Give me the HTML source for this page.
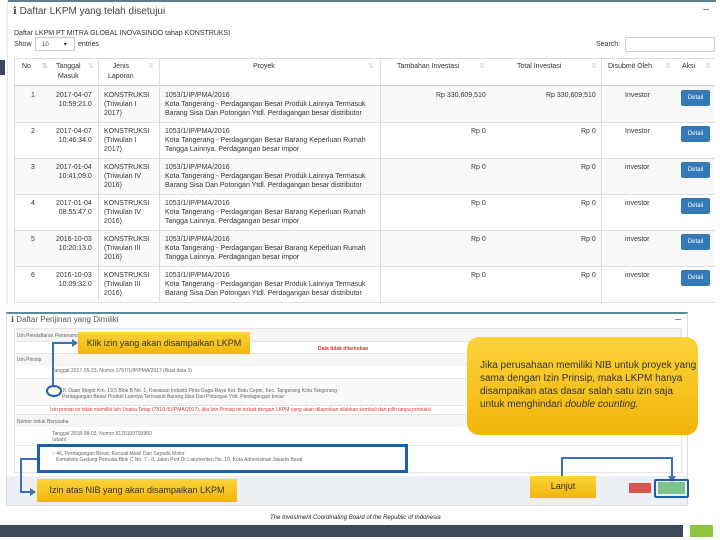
<!DOCTYPE html>
<html><head><meta charset="utf-8"><style>
*{margin:0;padding:0;box-sizing:border-box}
body{width:720px;height:540px;background:#fff;position:relative;overflow:hidden;font-family:"Liberation Sans",sans-serif;color:#333}
.a{position:absolute;white-space:nowrap}
.s{font-size:7px;line-height:9px}
.hd{font-size:7px;line-height:10px;text-align:center}
.vl{position:absolute;width:1px;background:#ddd}
.hl{position:absolute;height:1px;background:#ddd}
.btn{position:absolute;left:681px;width:29px;height:16px;background:#337ab7;color:#fff;font-size:6px;line-height:16px;text-align:center;border-radius:2px}
.y{position:absolute;background:linear-gradient(#fbd33a,#f2b50a);color:#333;font-family:"Liberation Sans Narrow","Liberation Sans",sans-serif}
.bl{position:absolute;background:#3e6fb5}
.tiny{font-size:5px;line-height:6px;color:#666}
</style></head><body>
<!-- top panel -->
<div class="a" style="left:7px;top:0;width:709px;height:2px;background:#5b7f95"></div>
<div class="a" style="left:7px;top:0;width:1px;height:305px;background:#e6e6e6"></div>
<div class="a" style="left:0;top:60px;width:5px;height:15px;background:#3d4a5c"></div>
<div class="a" style="left:13px;top:6px;font-size:10px;color:#444">ℹ&nbsp;Daftar LKPM yang telah disetujui</div>
<div class="a" style="left:703px;top:9px;width:6px;height:1px;background:#888"></div>
<div class="a s" style="left:14px;top:29px">Daftar LKPM PT MITRA GLOBAL INOVASINDO tahap KONSTRUKSI</div>
<div class="a s" style="left:14px;top:40px">Show</div>
<div class="a" style="left:35px;top:37px;width:40px;height:14px;border:1px solid #ccc;font-size:6px;padding:3px 6px">10<span style="margin-left:15px">▾</span></div>
<div class="a s" style="left:78px;top:40px">entries</div>
<div class="a s" style="left:596px;top:40px">Search:</div>
<div class="a" style="left:625px;top:37px;width:90px;height:15px;border:1px solid #ccc;border-radius:2px"></div>
<!-- table -->
<div class="a" style="left:15px;top:86px;width:700px;height:36px;background:#f9f9f9"></div>
<div class="a" style="left:15px;top:158px;width:700px;height:36px;background:#f9f9f9"></div>
<div class="a" style="left:15px;top:230px;width:700px;height:36px;background:#f9f9f9"></div>
<div class="hl" style="left:14px;top:58px;width:701px"></div>
<div class="hl" style="left:14px;top:85px;width:701px;background:#ccc"></div>
<div class="hl" style="left:14px;top:122px;width:701px"></div>
<div class="hl" style="left:14px;top:158px;width:701px"></div>
<div class="hl" style="left:14px;top:194px;width:701px"></div>
<div class="hl" style="left:14px;top:230px;width:701px"></div>
<div class="hl" style="left:14px;top:266px;width:701px"></div>
<div class="hl" style="left:14px;top:302px;width:701px"></div>
<div class="vl" style="left:14px;top:58px;height:245px"></div>
<div class="vl" style="left:98px;top:58px;height:245px"></div>
<div class="vl" style="left:159px;top:58px;height:245px"></div>
<div class="vl" style="left:380px;top:58px;height:245px"></div>
<div class="vl" style="left:601px;top:58px;height:245px"></div>
<div class="a hd" style="left:22px;top:62px">No</div>
<div class="a hd" style="left:56px;top:62px">Tanggal<br>Masuk</div>
<div class="a hd" style="left:108px;top:62px">Jenis<br>Laporan</div>
<div class="a hd" style="left:253px;top:62px">Proyek</div>
<div class="a hd" style="left:397px;top:62px">Tambahan Investasi</div>
<div class="a hd" style="left:517px;top:62px">Total Investasi</div>
<div class="a hd" style="left:608px;top:62px">Disubmit Oleh</div>
<div class="a hd" style="left:682px;top:62px">Aksi</div>
<div class="a" style="left:42px;top:62px;font-size:7px;color:#aaa">⇅</div>
<div class="a" style="left:88px;top:62px;font-size:7px;color:#ccc">⇅</div>
<div class="a" style="left:148px;top:62px;font-size:7px;color:#ccc">⇅</div>
<div class="a" style="left:368px;top:62px;font-size:7px;color:#ccc">⇅</div>
<div class="a" style="left:479px;top:62px;font-size:7px;color:#ccc">⇅</div>
<div class="a" style="left:591px;top:62px;font-size:7px;color:#ccc">⇅</div>
<div class="a" style="left:665px;top:62px;font-size:7px;color:#ccc">⇅</div>
<div class="a" style="left:705px;top:62px;font-size:7px;color:#ccc">⇅</div>

<div class="a s" style="left:31px;top:91px">1</div>
<div class="a s" style="left:56px;top:91px;text-align:right">2017-04-07<br>10:59:21.0</div>
<div class="a s" style="left:104px;top:91px">KONSTRUKSI<br>(Triwulan I<br>2017)</div>
<div class="a s" style="left:165px;top:91px">1053/1/IP/PMA/2016<br>Kota Tangerang - Perdagangan Besar Produk Lainnya Termasuk<br>Barang Sisa Dan Potongan Ytdl. Perdagangan besar distributor</div>
<div class="a s" style="left:436px;top:91px">Rp 330,609,510</div>
<div class="a s" style="left:546px;top:91px">Rp 330,609,510</div>
<div class="a s" style="left:625px;top:91px">Investor</div>
<div class="btn" style="top:90px">Detail</div>

<div class="a s" style="left:31px;top:127px">2</div>
<div class="a s" style="left:56px;top:127px;text-align:right">2017-04-07<br>10:46:34.0</div>
<div class="a s" style="left:104px;top:127px">KONSTRUKSI<br>(Triwulan I<br>2017)</div>
<div class="a s" style="left:165px;top:127px">1053/1/IP/PMA/2016<br>Kota Tangerang - Perdagangan Besar Barang Keperluan Rumah<br>Tangga Lainnya. Perdagangan besar impor</div>
<div class="a s" style="left:471px;top:127px">Rp 0</div>
<div class="a s" style="left:581px;top:127px">Rp 0</div>
<div class="a s" style="left:625px;top:127px">Investor</div>
<div class="btn" style="top:126px">Detail</div>

<div class="a s" style="left:31px;top:163px">3</div>
<div class="a s" style="left:56px;top:163px;text-align:right">2017-01-04<br>10:41:09.0</div>
<div class="a s" style="left:104px;top:163px">KONSTRUKSI<br>(Triwulan IV<br>2016)</div>
<div class="a s" style="left:165px;top:163px">1053/1/IP/PMA/2016<br>Kota Tangerang - Perdagangan Besar Produk Lainnya Termasuk<br>Barang Sisa Dan Potongan Ytdl. Perdagangan besar distributor</div>
<div class="a s" style="left:471px;top:163px">Rp 0</div>
<div class="a s" style="left:581px;top:163px">Rp 0</div>
<div class="a s" style="left:625px;top:163px">investor</div>
<div class="btn" style="top:162px">Detail</div>

<div class="a s" style="left:31px;top:199px">4</div>
<div class="a s" style="left:56px;top:199px;text-align:right">2017-01-04<br>08:55:47.0</div>
<div class="a s" style="left:104px;top:199px">KONSTRUKSI<br>(Triwulan IV<br>2016)</div>
<div class="a s" style="left:165px;top:199px">1053/1/IP/PMA/2016<br>Kota Tangerang - Perdagangan Besar Barang Keperluan Rumah<br>Tangga Lainnya. Perdagangan besar impor</div>
<div class="a s" style="left:471px;top:199px">Rp 0</div>
<div class="a s" style="left:581px;top:199px">Rp 0</div>
<div class="a s" style="left:625px;top:199px">investor</div>
<div class="btn" style="top:198px">Detail</div>

<div class="a s" style="left:31px;top:235px">5</div>
<div class="a s" style="left:56px;top:235px;text-align:right">2016-10-03<br>10:20:13.0</div>
<div class="a s" style="left:104px;top:235px">KONSTRUKSI<br>(Triwulan III<br>2016)</div>
<div class="a s" style="left:165px;top:235px">1053/1/IP/PMA/2016<br>Kota Tangerang - Perdagangan Besar Barang Keperluan Rumah<br>Tangga Lainnya. Perdagangan besar impor</div>
<div class="a s" style="left:471px;top:235px">Rp 0</div>
<div class="a s" style="left:581px;top:235px">Rp 0</div>
<div class="a s" style="left:625px;top:235px">investor</div>
<div class="btn" style="top:234px">Detail</div>

<div class="a s" style="left:31px;top:271px">6</div>
<div class="a s" style="left:56px;top:271px;text-align:right">2016-10-03<br>10:09:32.0</div>
<div class="a s" style="left:104px;top:271px">KONSTRUKSI<br>(Triwulan III<br>2016)</div>
<div class="a s" style="left:165px;top:271px">1053/1/IP/PMA/2016<br>Kota Tangerang - Perdagangan Besar Produk Lainnya Termasuk<br>Barang Sisa Dan Potongan Ytdl. Perdagangan besar distributor</div>
<div class="a s" style="left:471px;top:271px">Rp 0</div>
<div class="a s" style="left:581px;top:271px">Rp 0</div>
<div class="a s" style="left:625px;top:271px">investor</div>
<div class="btn" style="top:270px">Detail</div>

<!-- bottom panel -->
<div class="a" style="left:6px;top:312px;width:682px;height:194px;border:1px solid #d8dde3;border-top:2px solid #5b8aa0;background:#fff"></div>
<div class="a" style="left:11px;top:315px;font-size:8px;color:#555">ℹ&nbsp;Daftar Perijinan yang Dimiliki</div>
<div class="a" style="left:675px;top:319px;width:6px;height:1px;background:#888"></div>
<div class="a" style="left:14px;top:328px;width:668px;height:145px;border:1px solid #e5e5e5"></div>
<div class="a" style="left:15px;top:329px;width:666px;height:12px;background:#f5f5f5"></div>
<div class="a tiny" style="left:17px;top:333px">Izin Pendaftaran Penanaman Modal</div>
<div class="hl" style="left:15px;top:341px;width:666px;background:#e5e5e5"></div>
<div class="a tiny" style="left:318px;top:346px;color:#d33;font-weight:bold">Data tidak ditemukan</div>
<div class="hl" style="left:15px;top:353px;width:666px;background:#e5e5e5"></div>
<div class="a" style="left:15px;top:354px;width:666px;height:12px;background:#f5f5f5"></div>
<div class="a tiny" style="left:17px;top:357px">Izin Prinsip</div>
<div class="a tiny" style="left:52px;top:368px">Tanggal 2017-05-23, Nomor 1757/1/IP/PMA/2017 (Buat data 1)</div>
<div class="hl" style="left:15px;top:378px;width:666px;background:#e5e5e5"></div>
<div class="a" style="left:15px;top:379px;width:666px;height:26px;background:#f9f9f9"></div>
<div class="a tiny" style="left:62px;top:388px">Jl. Daan Mogot Km. 19,5 Blok B No. 1, Kawasan Industri Pinis Gaga Raya Kel. Batu Ceper, Kec. Tangerang Kota Tangerang<br>Perdagangan Besar Produk Lainnya Termasuk Barang Sisa Dan Potongan Ytdl. Perdagangan besar</div>
<div class="hl" style="left:15px;top:405px;width:666px;background:#e5e5e5"></div>
<div class="a tiny" style="left:50px;top:407px;color:#d33">Izin prinsip ini telah memiliki Izin Usaha Tetap (781/1/IU/PMA/2017), jika Izin Prinsip ini terkait dengan LKPM yang akan dilaporkan silahkan kembali dan pilih tanpa produksi</div>
<div class="hl" style="left:15px;top:414px;width:666px;background:#e5e5e5"></div>
<div class="a" style="left:15px;top:415px;width:666px;height:12px;background:#f5f5f5"></div>
<div class="a tiny" style="left:17px;top:419px">Nomor Induk Berusaha</div>
<div class="a tiny" style="left:52px;top:431px">Tanggal 2018-08-03, Nomor 8120100793960<br>(ubah)</div>
<div class="hl" style="left:15px;top:445px;width:666px;background:#e5e5e5"></div>
<div class="a tiny" style="left:52px;top:451px">○ 46, Perdagangan Besar, Kecuali Mobil Dan Sepeda Motor<br>&nbsp;&nbsp;&nbsp;Kompleks Gedung Pemuda Blok C No. 7 - 8, Jalan Prof Dr Latumenten No. 18, Kota Administrasi Jakarta Barat</div>
<div class="a" style="left:7px;top:476px;width:680px;height:29px;background:#ecf0f5"></div>
<div class="a" style="left:629px;top:483px;width:22px;height:10px;background:#d9534f"></div>
<div class="a" style="left:658px;top:482px;width:27px;height:12px;background:#7dc48a"></div>

<!-- footer -->
<div class="a" style="left:270px;top:515px;font-size:6px;font-style:italic;color:#222">The Investment Coordinating Board of the Republic of Indonesia</div>
<div class="a" style="left:0;top:525px;width:683px;height:12px;background:#3d4a5c"></div>
<div class="a" style="left:690px;top:525px;width:23px;height:12px;background:#8dc63f"></div>

<!-- annotations -->
<div class="y" style="left:78px;top:332px;width:172px;height:22px;font-size:9px;line-height:22px;text-align:center">Klik izin yang akan disampaikan LKPM</div>
<div class="y" style="left:37px;top:479px;width:200px;height:23px;font-size:9px;line-height:23px;text-align:center">Izin atas NIB yang akan disampaikan LKPM</div>
<div class="y" style="left:467px;top:337px;width:231px;height:98px;border-radius:12px;font-size:10px;line-height:13px;padding:22px 0 0 13px;white-space:normal">Jika perusahaan memiliki NIB untuk proyek yang sama dengan Izin Prinsip, maka LKPM hanya disampaikan atas dasar salah satu izin saja untuk menghindari <i>double counting.</i></div>
<div class="y" style="left:530px;top:476px;width:66px;height:22px;font-size:9px;line-height:20px;text-align:center">Lanjut</div>
<div class="a" style="left:37px;top:444px;width:371px;height:29px;border:3px solid #1d5fa8"></div>
<div class="a" style="left:46px;top:385px;width:16px;height:12px;border:2px solid #1d5fa8;border-radius:50%"></div>
<div class="bl" style="left:52px;top:343px;width:2px;height:43px"></div>
<div class="bl" style="left:52px;top:342px;width:22px;height:2px"></div>
<div class="a" style="left:72px;top:339px;width:0;height:0;border-top:4px solid transparent;border-bottom:4px solid transparent;border-left:6px solid #3e6fb5"></div>
<div class="bl" style="left:20px;top:458px;width:17px;height:2px"></div>
<div class="bl" style="left:20px;top:458px;width:2px;height:34px"></div>
<div class="bl" style="left:20px;top:491px;width:11px;height:2px"></div>
<div class="a" style="left:30px;top:488px;width:0;height:0;border-top:4px solid transparent;border-bottom:4px solid transparent;border-left:6px solid #3e6fb5"></div>
<div class="bl" style="left:561px;top:457px;width:2px;height:19px"></div>
<div class="bl" style="left:561px;top:457px;width:112px;height:2px"></div>
<div class="bl" style="left:671px;top:457px;width:2px;height:20px"></div>
<div class="a" style="left:668px;top:476px;width:0;height:0;border-left:4px solid transparent;border-right:4px solid transparent;border-top:6px solid #3e6fb5"></div>
<div class="a" style="left:654px;top:479px;width:35px;height:19px;border:2px solid #1d5fa8;border-radius:2px"></div>
</body></html>
